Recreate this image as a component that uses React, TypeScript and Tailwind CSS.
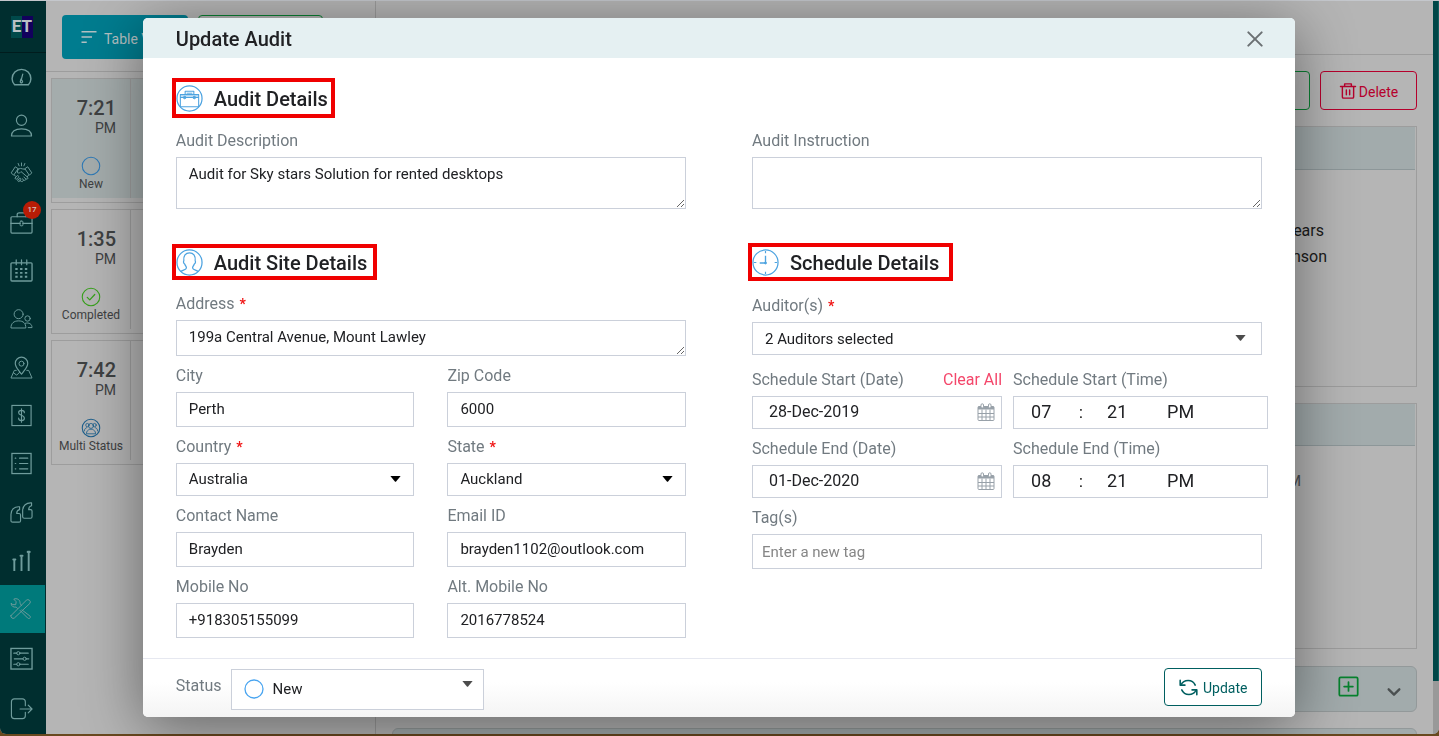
import type { ReactNode } from "react";

function Glyph({ children, className = "size-6" }: { children: ReactNode; className?: string }) {
  return (
    <svg viewBox="0 0 24 24" className={className} fill="none" stroke="currentColor" strokeLinecap="round" strokeLinejoin="round" aria-hidden="true">
      {children}
    </svg>
  );
}

const navItems: { name: string; icon: ReactNode; badge?: string; active?: boolean }[] = [
  {
    name: "Dashboard",
    icon: (
      <>
        <path d="M4.800 19.500C2.800 17.500 2.200 15.500 2.200 13.300A9.800 9.800 0 0 1 21.800 13.300C21.800 15.500 21.200 17.500 19.200 19.500Z" strokeWidth="1.500" />
        <path d="M13.300 8.500L12 13.500M11.500 13.500l-.6 2.200a1.200 1.200 0 1 0 2 0z" strokeWidth="1.300" />
      </>
    ),
  },
  {
    name: "Customers",
    icon: (
      <>
        <circle cx="12" cy="6.500" r="5.300" strokeWidth="1.200" />
        <path d="M1.500 23c0-4.800 3.500-7.500 10.500-7.500s10.500 2.700 10.500 7.500z" strokeWidth="1.200" />
      </>
    ),
  },
  {
    name: "Partners",
    icon: (
      <>
        <path d="M1.500 11l4-6 3 2-4.500 6.500zM22.500 11l-4-6-3 2 4.500 6.500z" />
        <path d="M8.500 7.500L11 6.700l2 .5 2.500.3M8.500 7.500l-1 3.500c1.500 1 3 .5 4-1l7 6c.8 1.500-.8 2.500-2 1.500l-2-1.700M4.500 13.500l1.500 1.500M16.500 17.500c.3 1.500-1 2.200-2.200 1.300l-1.500-1.300M14 19c0 1.500-1.500 2-2.700 1l-1.300-1M19.500 13.500L18 15.500" />
        <path d="M5.500 16.500l1.700-2c1-1 2.400.2 1.600 1.400l-1.400 1.700c-1 1-2.500 0-1.900-1.100zM8.300 18.700l1.300-1.500c1-1 2.400.2 1.600 1.400l-1.200 1.500c-1 1-2.500-.2-1.700-1.400z" />
        <path d="M12 1v3M8.500 1.500L9.500 4M15.500 1.500L14.500 4" />
      </>
    ),
  },
  {
    name: "Jobs",
    badge: "17",
    icon: (
      <>
        <rect x="1" y="6" width="22" height="17" rx="1" strokeWidth="1.300" />
        <path d="M7.500 6V3.500C7.500 2.500 8.500 2 9.500 2H14.500C15.500 2 16.500 2.500 16.500 3.500V6M1 13h9.500M13.500 13H23" strokeWidth="1.300" />
        <rect x="10.500" y="10.500" width="3" height="5" rx="1" />
      </>
    ),
  },
  {
    name: "Calendar",
    icon: (
      <>
        <rect x="1" y="4" width="22" height="19" rx="1" strokeWidth="1.400" />
        <path d="M6.500 1v5M12 1v5M17.500 1v5" strokeWidth="1.300" />
        <path d="M5.500 10.500h2.500M10.500 10.500h2.500M15.500 10.500h2.500M5.500 14.500h2.500M10.500 14.500h2.500M15.500 14.500h2.500M5.500 18.500h2.500M10.500 18.500h2.500M15.500 18.500h2.500" strokeWidth="2" strokeLinecap="butt" />
      </>
    ),
  },
  {
    name: "Teams",
    icon: (
      <>
        <circle cx="9" cy="7.500" r="4.700" />
        <path d="M1 21.500c0-4.500 3-7 8-7s7.500 2.500 7.500 7z" />
        <circle cx="18.300" cy="12" r="2.800" />
        <path d="M16 17c4-1.200 7 .8 7 4.500h-4" />
      </>
    ),
  },
  {
    name: "Map",
    icon: (
      <>
        <path d="M12 19C8.500 14 5.500 11.500 5.500 7.700a6.500 6.500 0 0 1 13 0C18.500 11.500 15.500 14 12 19z" strokeWidth="1.200" />
        <circle cx="12" cy="8" r="2.600" />
        <path d="M6.500 15H4.500L1 23H23L19.500 15H17.500M3.500 17.500L7 20l3-3" />
      </>
    ),
  },
  {
    name: "Payments",
    icon: (
      <>
        <rect x="2" y="1.500" width="20" height="21" strokeWidth="1.200" strokeLinejoin="miter" />
        <path d="M15 9c0-1.500-1.200-2.300-3-2.300S9 7.500 9 9c0 3.300 6 2.200 6 5.800 0 1.600-1.200 2.500-3 2.500s-3-.9-3-2.500M12 5v14" strokeWidth="1.200" />
      </>
    ),
  },
  {
    name: "Reports",
    icon: (
      <>
        <rect x="2" y="1.500" width="20" height="21" strokeWidth="1.300" strokeLinejoin="miter" />
        <path d="M5.500 6.500h.5M10 6.500h8.500M5.500 12h.5M10 12h8.500M5.500 17.500h.5M10 17.500h8.500" strokeWidth="1.300" />
      </>
    ),
  },
  {
    name: "Quotes",
    icon: (
      <>
        <path d="M10 6v3c-2 .5-3 2-3 4h2.500c1 0 1.500.5 1.500 1.500v6c0 1-.5 1.500-1.500 1.500H2.800C1.700 22 1 21.500 1 20.500V14C1 9 4.500 5.500 10 6z" strokeWidth="1.200" />
        <path d="M22.500 2v3c-2 .5-3 2-3 4H21.500c1 0 1.500.5 1.500 1.500v6c0 1-.5 1.500-1.500 1.500H15c-1.100 0-1.800-.5-1.800-1.500V10C13.200 5 17 1.500 22.500 2z" strokeWidth="1.200" />
      </>
    ),
  },
  {
    name: "Statistics",
    icon: (
      <>
        <path d="M4.500 23V11.500M12 23V7.500M19.500 23V3.500" strokeWidth="2" strokeLinecap="butt" />
        <path d="M3.500 11h2M11 7h2M18.500 3h2" strokeWidth="2.200" />
      </>
    ),
  },
  {
    name: "Audits",
    active: true,
    icon: (
      <>
        <path d="M2 19.500L18 3.500a2.500 2.500 0 0 1 3.800 3.200L5.500 22A2.400 2.400 0 0 1 2 19.500z" />
        <path d="M13.500 13.500l8.300 6.300c1.500 1.500-.8 3.700-2.300 2.200L11.500 14M9 12L7.500 10.500C4.500 11 2.200 9.500 2.200 6.500L4 8h3L7.500 5 5 2.200c3-1.200 6.300.3 6.500 3.500 0 1.200.5 2.300 1.800 3.300" />
      </>
    ),
  },
  {
    name: "Settings",
    icon: (
      <>
        <rect x="1" y="1.500" width="22" height="21.500" strokeWidth="1.400" strokeLinejoin="miter" />
        <path d="M4 6.500h3M10.500 6.500H19M4.500 12.300H13.500M17 12.300h2.500M4 18h3M10.500 18H19" strokeWidth="1.300" />
        <circle cx="8.700" cy="6.500" r="1.700" />
        <circle cx="15.300" cy="12.300" r="1.700" />
        <circle cx="8.700" cy="18" r="1.700" />
      </>
    ),
  },
  {
    name: "Log out",
    icon: (
      <path d="M16 9V5a3 3 0 0 0-3-3H4.500A3 3 0 0 0 1.500 5v14.500a3 3 0 0 0 3 3H13a3 3 0 0 0 3-3V16M10.500 12.500H23M19 8.500l4 4-4 4" strokeWidth="1.200" />
    ),
  },
];

function NavLink({ item }: { item: (typeof navItems)[number] }) {
  return (
    <a href="#" aria-label={item.name} className={`relative flex flex-1 items-center justify-center pr-1 text-[#6f9c9c] ${item.active ? "mr-px bg-[#007a7b]" : ""}`}>
      <Glyph className="size-[23px]">{item.icon}</Glyph>
      {item.badge && (
        <span className="absolute top-[3px] right-[5px] flex size-[18px] items-center justify-center rounded-full bg-[#b81c06] text-[8px] font-medium text-[#d5c4c0]">{item.badge}</span>
      )}
    </a>
  );
}

function Sidebar() {
  return (
    <nav className="flex w-[46px] shrink-0 flex-col bg-[#002e2f]">
      <div className="flex h-[52px] shrink-0 items-center justify-center border-b border-[#001c1d] pr-0.5">
        <span className="flex h-[22px] w-[22px] items-center justify-center bg-linear-to-r from-[#00494a] from-50% to-[#12005c] to-50% text-[17px] font-bold text-[#b9c0c4]">ET</span>
      </div>
      <div className="flex min-h-0 grow-[23] basis-0 flex-col">
        {navItems.slice(0, 12).map((i) => <NavLink key={i.name} item={i} />)}
      </div>
      <div className="flex min-h-0 grow-[4] basis-0 flex-col">
        {navItems.slice(12).map((i) => <NavLink key={i.name} item={i} />)}
      </div>
    </nav>
  );
}

const visits = [
  { time: "7:21", status: "New", selected: true },
  { time: "1:35", status: "Completed", selected: false },
  { time: "7:42", status: "Multi Status", selected: false },
];

function StatusIcon({ status }: { status: string }) {
  if (status === "Completed")
    return (
      <Glyph className="size-5 text-[#37a01b]">
        <circle cx="12" cy="12" r="10.500" strokeWidth="1.300" />
        <path d="M7.500 12.500l3 3 6-6.500" strokeWidth="1.500" />
      </Glyph>
    );
  if (status === "Multi Status")
    return (
      <Glyph className="size-5 text-[#1d5f8c]">
        <circle cx="12" cy="12" r="10.500" strokeWidth="1.300" />
        <circle cx="12" cy="9.500" r="3" />
        <circle cx="7.700" cy="8.500" r="2" />
        <circle cx="16.300" cy="8.500" r="2" />
        <path d="M6.500 18.500c0-3 2-4 4-5h3c2 1 4 2 4 5zM4 15.500c0-2.500 1.500-3.500 3-4M20 15.500c0-2.500-1.500-3.500-3-4" />
      </Glyph>
    );
  return (
    <Glyph className="size-5 text-[#2f79b5]">
      <circle cx="12" cy="12" r="10.500" strokeWidth="1.300" />
    </Glyph>
  );
}

function VisitList() {
  return (
    <section className="flex w-[330px] shrink-0 flex-col border-r border-[#9b9b9b]">
      <div className="flex h-[71px] shrink-0 items-start gap-2.5 border-b border-[#9d9d9d] px-4 pt-3.5">
        <button type="button" className="flex h-11 w-[126px] items-center gap-1.5 rounded-sm bg-[#007c8f] pl-[18px] text-[14px] text-[#b4c0c2]">
          <Glyph className="size-[18px]">
            <path d="M2 5h20M2 12h14M2 19h7" strokeWidth="2" strokeLinecap="butt" />
          </Glyph>
          <span className="pt-1">Table View</span>
        </button>
        <button type="button" aria-label="Map view" className="h-11 w-[125px] rounded-sm border border-[#0a7f32]" />
      </div>
      <ul className="flex flex-col gap-1.5 pt-1.5 pl-[5px]">
        {visits.map((v) => (
          <li key={v.time} className="flex h-[125px] border border-r-0 border-[#9d9d9d] pb-1 text-[#3e4142]">
            <div className={`flex w-[79px] flex-col border-r border-[#9d9d9d] ${v.selected ? "bg-[#a4acac]" : ""}`}>
              <div className="flex flex-col items-end pt-[18px] pr-3.5">
                <span className="text-[20px] leading-[23px] font-medium">{v.time}</span>
                <span className="text-[14px] leading-4">PM</span>
              </div>
              <div className="flex flex-col items-center pt-5">
                <StatusIcon status={v.status} />
                <span className="text-[12px] leading-4 whitespace-nowrap">{v.status}</span>
              </div>
            </div>
            <div className={`flex-1 ${v.selected ? "bg-[#a4acac]" : ""}`} />
          </li>
        ))}
      </ul>
    </section>
  );
}

function DetailPane() {
  return (
    <section className="flex min-w-0 flex-1 flex-col">
      <div className="h-[54px] shrink-0 border-b border-[#9d9d9d]" />
      <div className="flex flex-1 flex-col px-4 pt-4">
        <div className="flex shrink-0 justify-end gap-2.5">
          <button type="button" aria-label="Edit" className="h-[39px] w-[97px] rounded-sm border border-[#0a7f32]" />
          <button type="button" className="flex h-[39px] w-[97px] items-center justify-center gap-0.5 rounded-sm border border-[#b5002c] text-[14px] text-[#b5002c]">
            <Glyph className="size-[18px]">
              <path d="M2 6h20M7.500 6V2.500h9V6M4.500 6v14c0 1 .5 1.500 1.500 1.500h12c1 0 1.500-.5 1.500-1.500V6M9.800 10.500v6.500M14.200 10.500v6.500" strokeWidth="1.900" />
            </Glyph>
            <span className="pt-[3px]">Delete</span>
          </button>
        </div>
        <div className="mt-4 h-[261px] shrink-0 border border-[#9d9d9d] pr-px">
          <div className="h-[43px] border-b border-[#8d9799] bg-[#a2abac]" />
          <div className="flex flex-col items-end pt-12 pr-[88px] text-[16px] leading-[26px] text-[#1b1b1b]">
            <span className="pr-[3px]">ears</span>
            <span>nson</span>
          </div>
        </div>
        <div className="mt-4 h-[246px] shrink-0 border border-[#9d9d9d] pr-px">
          <div className="h-[42px] border-b border-[#8d9799] bg-[#a2abac]" />
          <div className="flex justify-end pt-6 pr-[114px] text-[15px] text-[#4b4f52]">PM</div>
        </div>
        <div className="mt-[17px] flex h-[46px] shrink-0 items-center justify-end gap-[27px] rounded-md border border-[#93999a] bg-[#a2abac] pr-3.5">
          <button type="button" aria-label="Add" className="mb-1.5 text-[#07822e]">
            <Glyph className="size-[21px]">
              <rect x="1.500" y="1.500" width="21" height="21" rx="1.500" strokeWidth="2" />
              <path d="M12 7v10M7 12h10" strokeWidth="2" />
            </Glyph>
          </button>
          <button type="button" aria-label="Expand" className="pt-1.5 text-[#4a4f50]">
            <Glyph className="size-4">
              <path d="M4 8l8 8 8-8" strokeWidth="3.500" />
            </Glyph>
          </button>
        </div>
        <div className="mt-4 h-12 shrink-0 rounded-md border border-[#93999a] bg-[#a2abac]" />
      </div>
    </section>
  );
}

const labelText = "text-[16px] leading-5 text-[#717a80]";
const box = "block w-full border border-[#cbd0da] bg-white px-3 text-[#202124] outline-none";

function Label({ id, text, required }: { id: string; text: string; required?: boolean }) {
  return (
    <label htmlFor={id} className={`block h-9 pt-2.5 whitespace-nowrap ${labelText}`}>
      {text}
      {required && <span className="ml-[5px] text-[14px] font-bold text-[#f01414]">*</span>}
    </label>
  );
}

function TextField({ id, label, value, placeholder, className = "px-3 pb-0.5" }: { id: string; label: string; value?: string; placeholder?: string; className?: string }) {
  return (
    <div>
      <Label id={id} text={label} />
      <input id={id} defaultValue={value} placeholder={placeholder} className={`${box} h-[35px] text-[15px] placeholder:text-[#868686] ${className}`} />
    </div>
  );
}

function AreaField({ id, label, value, required, rows }: { id: string; label: string; value?: string; required?: boolean; rows: string }) {
  return (
    <div>
      <Label id={id} text={label} required={required} />
      <textarea id={id} defaultValue={value} className={`${box} resize overflow-hidden pt-1.5 text-[15px] leading-5 ${rows}`} />
    </div>
  );
}

function Caret({ className = "" }: { className?: string }) {
  return (
    <svg viewBox="0 0 12 7" className={`pointer-events-none absolute h-1.5 w-[11px] ${className}`} aria-hidden="true">
      <path d="M0 0h12L6.700 6.500a1 1 0 0 1-1.400 0z" fill="currentColor" />
    </svg>
  );
}

function SelectField({ id, label, value, muted }: { id: string; label: string; value: string; muted?: boolean }) {
  return (
    <div>
      <Label id={id} text={label} required />
      <div className="relative">
        <select id={id} className={`${box} h-[33px] appearance-none text-[15px] ${muted ? "pt-0.5 text-[#4c4c4c]" : ""}`}>
          <option>{value}</option>
        </select>
        <Caret className={muted ? "top-[13px] right-4 text-[#4c4c4c]" : "top-[13px] right-[13px] text-black"} />
      </div>
    </div>
  );
}

function CalendarIcon() {
  return (
    <svg viewBox="0 0 18 18" className="pointer-events-none absolute top-[7px] right-[7px] size-[18px] text-[#98a1a9]" fill="none" stroke="currentColor" aria-hidden="true">
      <path d="M1 3.500h16v3H1z" fill="currentColor" stroke="none" />
      <rect x="1" y="3.500" width="16" height="14" rx="1" />
      <path d="M1 10.500h16M1 14h16M5 6.500v11M9 6.500v11M13 6.500v11" />
      <rect x="4" y="0.800" width="2.500" height="4.200" rx="1.200" fill="white" />
      <rect x="11.500" y="0.800" width="2.500" height="4.200" rx="1.200" fill="white" />
    </svg>
  );
}

function ScheduleRow({ name, date, hour, clear }: { name: string; date: string; hour: string; clear?: boolean }) {
  const id = name.toLowerCase();
  const part = "bg-transparent pb-0.5 text-[18px] text-[#202124] outline-none";
  return (
    <div className="-mr-1.5 grid grid-cols-[250fr_255fr] gap-[11px]">
      <div>
        <div className="flex justify-between">
          <Label id={`${id}-date`} text={`Schedule ${name} (Date)`} />
          {clear && <button type="button" className="h-9 pt-1 text-[16px] text-[#f4476b]">Clear All</button>}
        </div>
        <div className="relative">
          <input id={`${id}-date`} defaultValue={date} className={`${box} h-[33px] pb-0.5 pl-4 text-[16px]`} />
          <CalendarIcon />
        </div>
      </div>
      <div>
        <Label id={`${id}-hour`} text={`Schedule ${name} (Time)`} />
        <div className="flex h-[33px] items-center border border-[#cbd0da] pl-[17px]">
          <input id={`${id}-hour`} defaultValue={hour} className={`w-12 ${part}`} />
          <span className="w-7 text-[16px]">:</span>
          <input aria-label={`${name} minute`} defaultValue="21" className={`w-[60px] ${part}`} />
          <input aria-label={`${name} period`} defaultValue="PM" className={`w-12 ${part}`} />
        </div>
      </div>
    </div>
  );
}

function SectionTitle({ title, icon, size }: { title: string; icon: ReactNode; size: string }) {
  return (
    <div className="-ml-1 flex h-10 items-center">
      <h2 className={`flex items-center gap-[11px] border-4 border-[#f00000] text-[20px] font-medium text-[#202124] ${size}`}>
        <svg viewBox="0 0 28 28" className="size-[27px] text-[#4da3e0]" fill="none" stroke="currentColor" strokeLinejoin="round" aria-hidden="true">
          <circle cx="14" cy="14" r="13" strokeWidth="1.300" />
          {icon}
        </svg>
        <span className="pt-0.5">{title}</span>
      </h2>
    </div>
  );
}

function AuditDialog() {
  return (
    <div className="fixed inset-0 flex items-start justify-center pt-[18px] pr-px">
      <form role="dialog" aria-label="Update Audit" className="w-[calc(80%+2px)] overflow-hidden rounded-[5px] bg-white shadow-[0_10px_60px_rgba(0,0,0,0.45)]">
        <header className="flex h-10 items-center justify-between bg-[#e5f0f2] pr-8 pl-[33px]">
          <h1 className="pt-0.5 text-[20px] font-medium text-[#202124]">Update Audit</h1>
          <button type="button" aria-label="Close" className="pt-0.5 text-[#6b7073]">
            <Glyph className="size-4">
              <path d="M2 2l20 20M22 2L2 22" strokeWidth="3" />
            </Glyph>
          </button>
        </header>

        <div className="px-[33px] pt-5 pb-5">
          <SectionTitle
            title="Audit Details"
            size="h-10 pr-[3px]"
            icon={
              <>
                <path d="M4.500 10h19v12.500h-19zM9.500 10V6.500h9V10M4.500 13h19" strokeWidth="1.100" />
                <path d="M11 8.500h6" strokeWidth="1" />
                <path d="M5 10.500h18v2H5z" fill="currentColor" fillOpacity="0.35" stroke="none" />
                <circle cx="9" cy="13" r="1.300" fill="currentColor" />
                <circle cx="19" cy="13" r="1.300" fill="currentColor" />
              </>
            }
          />
          <div className="mt-[3px] grid grid-cols-2 gap-x-[66px]">
            <AreaField id="description" label="Audit Description" value="Audit for Sky stars Solution for rented desktops" rows="h-[52px]" />
            <AreaField id="instruction" label="Audit Instruction" rows="h-[52px]" />
          </div>

          <div className="mt-[33px] grid grid-cols-2 gap-x-[66px]">
            <section>
              <SectionTitle
                title="Audit Site Details"
                size="h-9 pr-1.5"
                icon={
                  <path d="M5 23.500c1.500-1.800 5.500-1.500 5.800-3.800.1-1.500-1.200-2.200-1.800-4.200-1.300-.8-1.500-2.500-.9-3.200C7.500 7 10 4 14 4s6.500 3 5.900 8.300c.6.7.4 2.400-.9 3.200-.6 2-1.900 2.700-1.800 4.200.3 2.300 4.300 2 5.800 3.800" strokeWidth="1.300" />
                }
              />
              <div className="mt-0.5">
                <AreaField id="address" label="Address" value="199a Central Avenue, Mount Lawley" required rows="h-9" />
              </div>
              <div className="grid grid-cols-2 gap-x-[33px]">
                <TextField id="city" label="City" value="Perth" />
                <TextField id="zip" label="Zip Code" value="6000" />
                <SelectField id="country" label="Country" value="Australia" />
                <SelectField id="state" label="State" value="Auckland" />
                <TextField id="contact" label="Contact Name" value="Brayden" />
                <TextField id="email" label="Email ID" value="brayden1102@outlook.com" />
                <TextField id="mobile" label="Mobile No" value="+918305155099" />
                <TextField id="alt-mobile" label="Alt. Mobile No" value="2016778524" />
              </div>
            </section>

            <section>
              <SectionTitle
                title="Schedule Details"
                size="h-[38px] pr-2.5"
                icon={
                  <>
                    <path d="M14 7v7.500H8" strokeWidth="1.400" />
                    <path d="M14 2v2.500M14 23.500V26M2 14h2.500M23.500 14H26" strokeWidth="1.200" />
                    <circle cx="14" cy="14.500" r="1" fill="currentColor" />
                  </>
                }
              />
              <div className="mt-1">
                <SelectField id="auditors" label="Auditor(s)" value="2 Auditors selected" muted />
              </div>
              <div className="mt-[5px]">
                <ScheduleRow name="Start" date="28-Dec-2019" hour="07" clear />
              </div>
              <ScheduleRow name="End" date="01-Dec-2020" hour="08" />
              <TextField id="tags" label="Tag(s)" placeholder="Enter a new tag" className="pl-[9px]" />
            </section>
          </div>
        </div>

        <footer className="flex h-[59px] items-start justify-between border-t border-[#e6e8f0] bg-linear-to-b from-white from-40% to-[#f4f4f4] px-[33px] pt-[9px]">
          <div className="flex gap-[9px] pt-px">
            <label htmlFor="status" className={`pt-[7px] ${labelText}`}>Status</label>
            <div className="relative w-[253px]">
              <select id="status" className={`${box} h-[41px] appearance-none pl-[41px] text-[15px]`}>
                <option>New</option>
              </select>
              <svg viewBox="0 0 20 20" className="pointer-events-none absolute top-2.5 left-[13px] size-5" fill="none" stroke="#4aa5f0" aria-hidden="true">
                <circle cx="10" cy="10" r="9" strokeWidth="1.300" />
              </svg>
              <Caret className="top-3 right-[11px] text-[#4c4c4c]" />
            </div>
          </div>
          <button type="submit" className="flex h-[38px] w-[98px] items-center justify-center gap-[5px] rounded-sm border border-[#005f60] bg-white text-[14px] text-[#005f60]">
            <Glyph className="size-[19px]">
              <path d="M1.500 3v6h6M22.500 21v-6h-6" strokeWidth="2" />
              <path d="M2.500 8.500C6 1.500 17 1 20.500 9M21.500 15.500C18 22.500 7 23 3.500 15" strokeWidth="2" />
            </Glyph>
            <span className="pt-0.5">Update</span>
          </button>
        </footer>
      </form>
    </div>
  );
}

export default function App() {
  return (
    <div className="h-screen overflow-hidden bg-[#69491f] pb-0.5 font-['Roboto',sans-serif]">
      <main className="flex h-full overflow-hidden rounded-b-md border-t border-[#c4c7cc] bg-[#b5b5b5]">
        <Sidebar />
        <VisitList />
        <DetailPane />
        <div className="w-1.5 shrink-0 bg-[#999999]">
          <div className="h-[680px] border-r border-[#146060] bg-[#004748]" />
        </div>
      </main>
      <AuditDialog />
    </div>
  );
}
